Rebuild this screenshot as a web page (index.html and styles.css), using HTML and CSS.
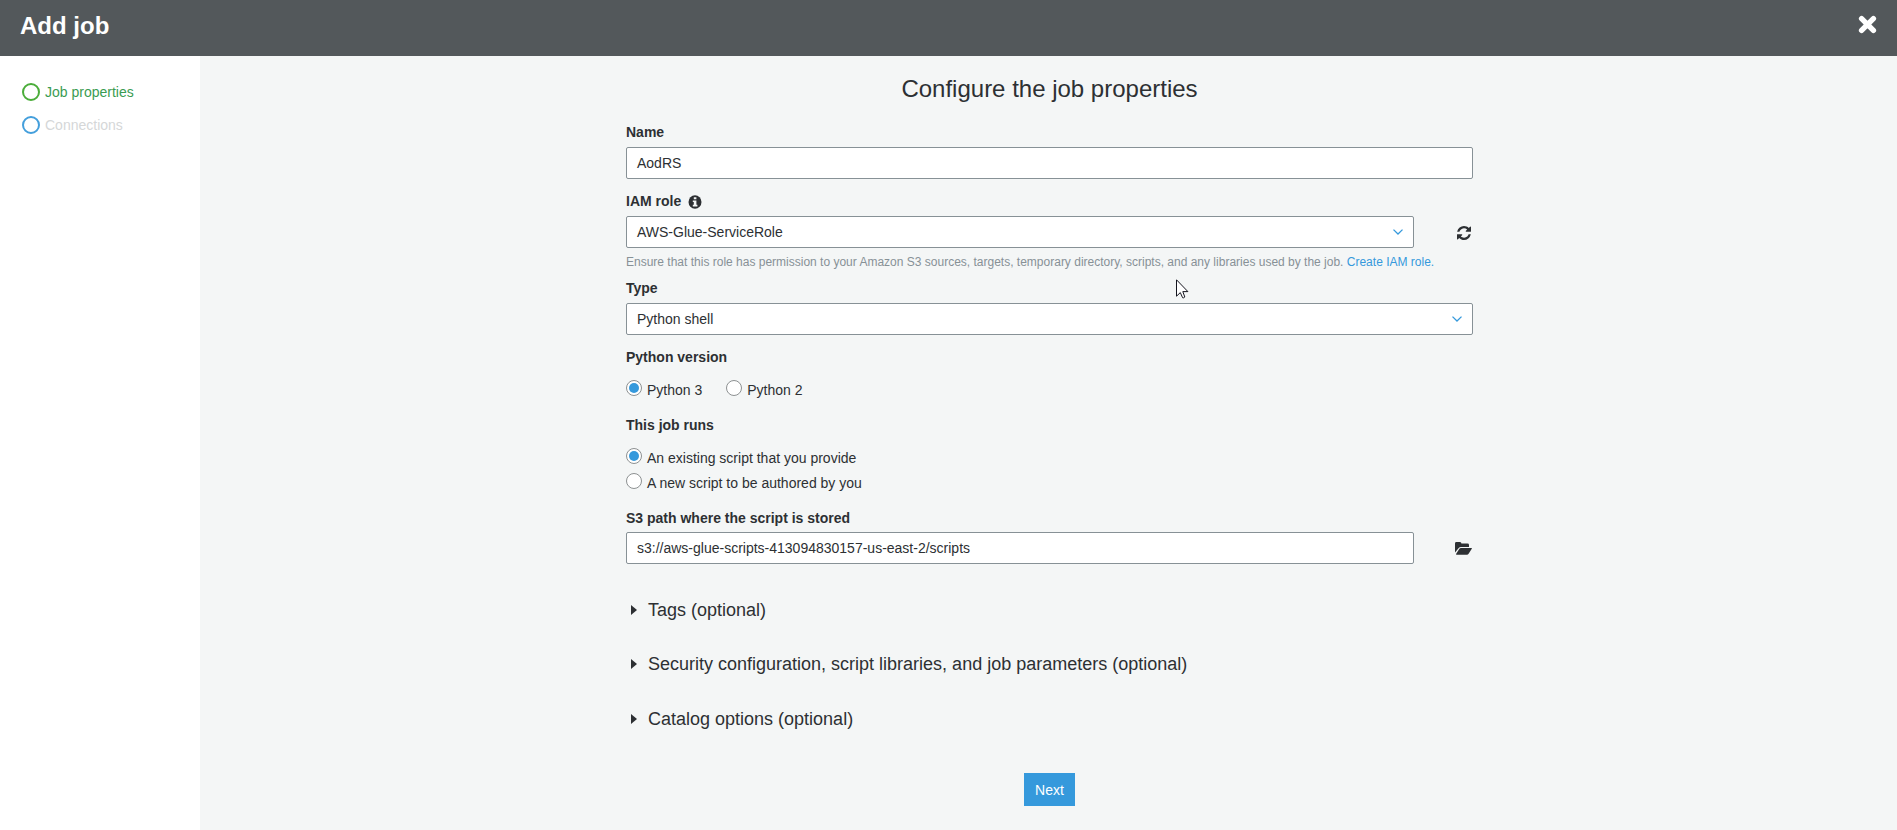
FILE: index.html
```html
<!DOCTYPE html>
<html lang="en">
<head>
<meta charset="utf-8">
<title>Add job</title>
<link rel="stylesheet" href="styles.css">
</head>
<body>
<header class="topbar">
  <h1 class="topbar-title">Add job</h1>
  <svg class="close" width="19" height="19" viewBox="0 0 19 19"><path d="M3.6 3.6 15.400 15.400M15.400 3.6 3.6 15.400" stroke="#fff" stroke-width="5.4" stroke-linecap="round"/></svg>
</header>
<div class="layout">
  <nav class="steps">
    <div class="step step-current"><span class="ring"></span>Job properties</div>
    <div class="step step-next"><span class="ring"></span>Connections</div>
  </nav>
  <main class="main">
    <form class="form">
      <h2 class="heading">Configure the job properties</h2>

      <div class="label">Name</div>
      <div class="box">AodRS</div>

      <div class="label label-info">IAM role
        <svg width="14" height="14" viewBox="0 0 14 14"><ellipse cx="7" cy="7" rx="6.500" ry="6.800" fill="#2d3033"/><path d="M5.8 2.3h2.6v2H5.8zM4.8 5.4h3.6v4.300h1v1.700H4.8V9.700h1V7.100h-1z" fill="#f4f6f6"/></svg>
      </div>
      <div class="row">
        <div class="box box-short">AWS-Glue-ServiceRole
          <svg width="10" height="6" viewBox="0 0 10 6"><path d="M.5.6 5 5 9.500.6" fill="none" stroke="#3599dc" stroke-width="1.3"/></svg>
        </div>
        <svg class="refresh" width="14" height="14" viewBox="0 0 1536 1536"><path fill="#2d3033" d="M1511 928q0 5-1 7-64 268-268 434.500T764 1536q-146 0-282.500-55T238 1324l-129 129q-19 19-45 19t-45-19-19-45V960q0-26 19-45t45-19h448q26 0 45 19t19 45-19 45l-137 137q71 66 161 102t187 36q134 0 250-65t186-179q11-17 53-117 8-23 30-23h192q13 0 22.500 9.500t9.500 22.500zm25-800v448q0 26-19 45t-45 19h-448q-26 0-45-19t-19-45 19-45l138-138Q969 256 768 256q-134 0-250 65T332 500q-11 17-53 117-8 23-30 23H50q-13 0-22.500-9.500T18 608v-7q65-268 270-434.500T768 0q146 0 284 55.500T1297 212l130-129q19-19 45-19t45 19 19 45z"/></svg>
      </div>
      <div class="hint">Ensure that this role has permission to your Amazon S3 sources, targets, temporary directory, scripts, and any libraries used by the job. <a class="link">Create IAM role.</a></div>

      <div class="label label-type">Type</div>
      <div class="box">Python shell
        <svg width="10" height="6" viewBox="0 0 10 6"><path d="M.5.6 5 5 9.500.6" fill="none" stroke="#3599dc" stroke-width="1.3"/></svg>
      </div>

      <div class="label">Python version</div>
      <div class="radios radios-inline">
        <div class="option"><span class="radio radio-on"></span>Python 3</div>
        <div class="option"><span class="radio"></span>Python 2</div>
      </div>

      <div class="label">This job runs</div>
      <div class="radios">
        <div class="option"><span class="radio radio-on"></span>An existing script that you provide</div>
        <div class="option"><span class="radio"></span>A new script to be authored by you</div>
      </div>

      <div class="label label-path">S3 path where the script is stored</div>
      <div class="row">
        <div class="box box-short">s3://aws-glue-scripts-413094830157-us-east-2/scripts</div>
        <svg class="folder" width="17" height="13" viewBox="0 0 17 13"><path fill="#2d3033" d="M0 10.600V1.400Q0 0 1.400 0H5Q6.400 0 6.400 1.600H12.500Q14 1.600 14 3V5H6Q4.500 5 3.500 6.200Z"/><path fill="#2d3033" d="M4.400 6.800Q5 6 6 6H16.300Q17.300 6 16.800 6.800L13.600 11.700Q13 12.700 12 12.700H1.700Q.6 12.700 1.200 11.800Z"/></svg>
      </div>

      <div class="sections">
        <div class="section"><span class="caret"></span>Tags (optional)</div>
        <div class="section"><span class="caret"></span>Security configuration, script libraries, and job parameters (optional)</div>
        <div class="section"><span class="caret"></span>Catalog options (optional)</div>
      </div>

      <button class="next" type="button">Next</button>
    </form>
  </main>
</div>
<svg class="cursor" width="13" height="20" viewBox="0 0 13 20"><path d="M.5.800V17.200L4.300 13.600 6.600 18.700Q7.800 19.300 8.800 18L6.800 12.600H11.900Z" fill="#fff" stroke="#15151f" stroke-width="1"/></svg>
</body>
</html>
```
FILE: styles.css
```css
* { box-sizing: border-box; }
body {
  margin: 0;
  height: 830px;
  overflow: hidden;
  display: flex;
  flex-direction: column;
  font: 14px/16px "Liberation Sans", Arial, sans-serif;
  color: #2d3033;
  background: #fff;
}
.topbar {
  flex: none;
  height: 56px;
  padding: 0 20px;
  display: flex;
  justify-content: space-between;
  align-items: flex-start;
  background: #53585b;
}
.topbar-title { margin: 12px 0 0; font-size: 24px; line-height: 28px; color: #fff; }
.close { margin-top: 15px; }
.layout { flex: 1; display: flex; }
.steps {
  width: 200px;
  padding: 27px 22px 0;
  display: flex;
  flex-direction: column;
  gap: 15px;
}
.step { display: flex; align-items: center; height: 18px; gap: 5px; }
.step-current { color: #3a9c52; }
.step-next { color: #d5d7d8; }
.ring { width: 18px; height: 18px; border: 2px solid #4bad3a; border-radius: 50%; }
.step-next .ring { border-color: #449fdc; }
.main { flex: 1; background: #f4f6f6; }
.form {
  width: 847px;
  margin-left: 426px;
  padding-top: 19px;
  display: flex;
  flex-direction: column;
}
.heading { margin: 0; font-size: 24px; line-height: 28px; font-weight: 400; text-align: center; }
.label { margin-top: 21px; height: 23px; font-weight: 700; }
.box + .label, .row + .label { margin-top: 14px; }
.label-info { display: flex; gap: 7px; }
.label-info svg { margin-top: 2px; }
.label-type { margin-top: 11px; }
.label-path { height: 22px; }
.box {
  height: 32px;
  padding: 0 10px;
  display: flex;
  align-items: center;
  justify-content: space-between;
  background: #fff;
  border: 1px solid #879196;
  border-radius: 2px;
}
.box-short { width: 788px; }
.row { display: flex; justify-content: space-between; align-items: center; }
.refresh { margin: 2px 2px 0 0; }
.folder { margin: 1px 1px 0 0; }
.hint { margin-top: 7px; height: 14px; font-size: 12px; line-height: 14px; color: #879196; white-space: nowrap; }
.link { color: #3599dc; }
.radios { margin-top: 8px; display: flex; flex-direction: column; gap: 9px; }
.radios-inline { flex-direction: row; gap: 24px; }
.option { display: flex; gap: 5px; height: 16px; line-height: 20px; }
.radio { width: 16px; height: 16px; padding: 2px; border: 1px solid #8d9192; border-radius: 50%; background: #fff; }
.radio-on::before { content: ""; display: block; width: 10px; height: 10px; border-radius: 50%; background: #3599dc; }
.sections { margin-top: 36px; display: flex; flex-direction: column; gap: 34px; font-size: 18px; line-height: 20px; }
.section { display: flex; align-items: center; gap: 11px; padding-left: 5px; }
.section:last-child { margin-top: 1px; }
.caret { width: 6px; height: 10px; background: #2d3033; clip-path: polygon(0 0, 100% 50%, 0 100%); }
.next {
  align-self: center;
  width: 51px;
  height: 33px;
  margin-top: 44px;
  padding: 0;
  border: 0;
  background: #3599dc;
  color: #fff;
  font: inherit;
}
/* Mouse pointer floats over the page */
.cursor { position: absolute; left: 1176px; top: 279px; }
```
